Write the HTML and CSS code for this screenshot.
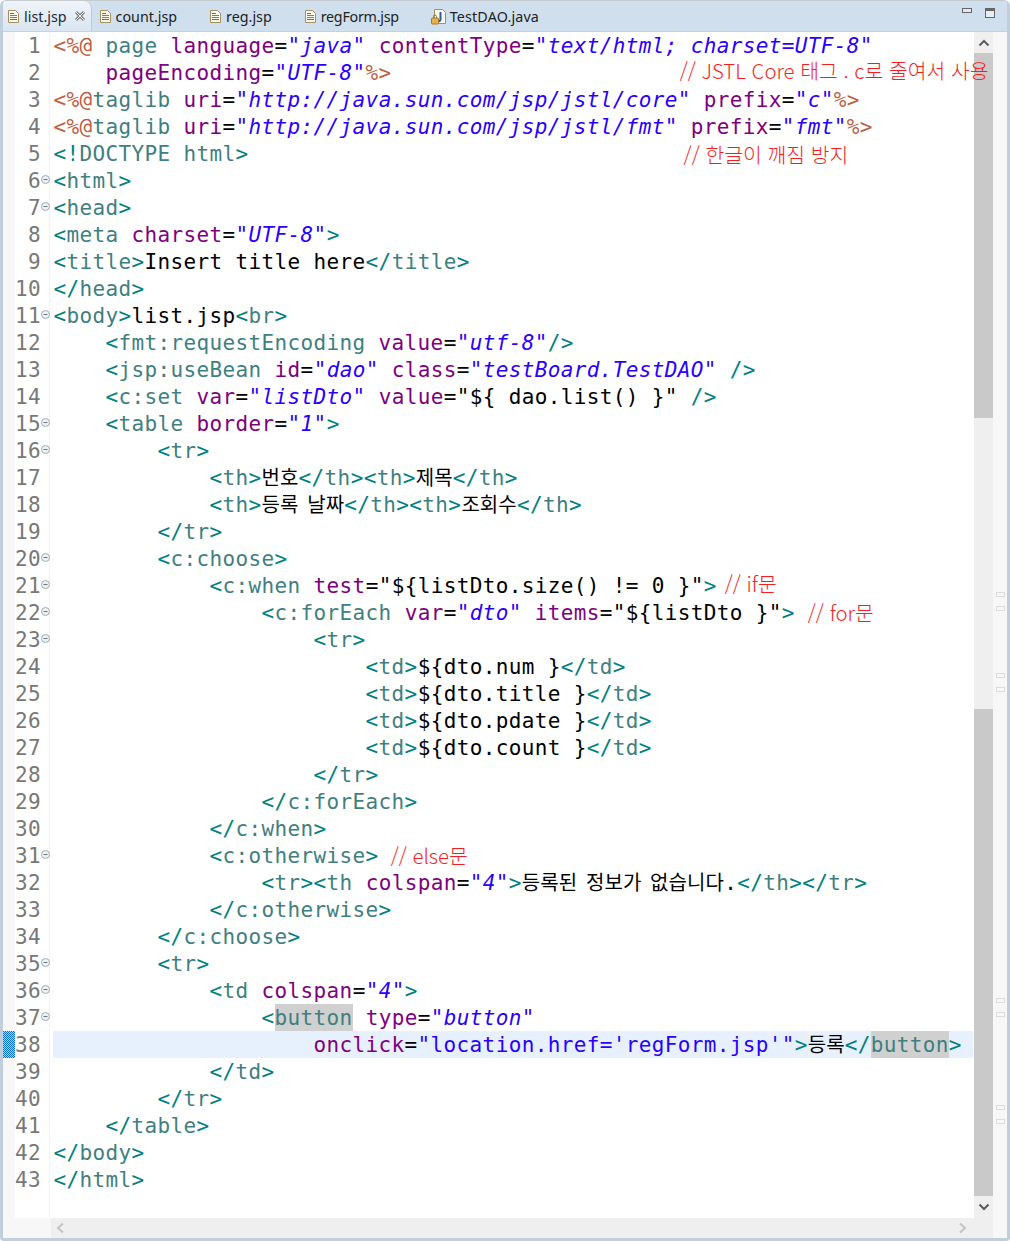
FILE: index.html
```
<!DOCTYPE html>
<html lang="ko">
<head>
<meta charset="utf-8">
<title>list.jsp</title>
<link rel="stylesheet" href="styles.css">
</head>
<body>
<svg class="defs" width="0" height="0" aria-hidden="true">
<defs>
<pattern id="dither" width="2" height="2" patternUnits="userSpaceOnUse">
<rect width="2" height="2" fill="#a8d0f5"/><rect width="1" height="1" fill="#0a72dc"/><rect x="1" y="1" width="1" height="1" fill="#0a72dc"/>
</pattern>
</defs>
<symbol id="file" viewBox="0 0 13 15">
<path d="M1.5 1.5h7l3 3v9h-10z" fill="#fbf8ee" stroke="#a8905c"/>
<path d="M3 4.5h4" stroke="#5b6f9e"/><path d="M3 6.5h7" stroke="#c06060"/><path d="M3 8.5h7" stroke="#5b8f6e"/><path d="M3 10.5h7" stroke="#5b6f9e"/>
</symbol>
<symbol id="java" viewBox="0 0 16 17">
<path d="M3.5 1.5h8l3 3v11h-11z" fill="#fbf8ee" stroke="#a8905c"/>
<path d="M9.5 4v7.5c0 1.5-1.5 2-3 1.5" fill="none" stroke="#2c5fa8" stroke-width="2"/>
<rect x="0.5" y="10" width="7" height="6" rx="1" fill="#e8b04c" stroke="#a87a2c"/>
<path d="M2.500 10V8.500a1.500 1.500 0 0 1 3 0V10" fill="none" stroke="#8a7a5c"/>
</symbol>
<symbol id="fold" viewBox="0 0 9 9">
<circle cx="4.500" cy="4.500" r="4" fill="#eef2f4" stroke="#a0acb4"/>
<path d="M2.500 4.500h4" stroke="#6c7a84"/>
</symbol>
</svg>
<div class="frame">
<header class="tabbar">
<div class="tab active"><svg class="ico"><use href="#file"/></svg><span>list.jsp</span>
<svg class="close" viewBox="0 0 12 12"><path d="M2 2l8 8M10 2l-8 8" stroke="#7c7c7c" stroke-width="3"/><path d="M2 2l8 8M10 2l-8 8" stroke="#f4f4f4" stroke-width="1"/></svg></div>
<div class="tab"><svg class="ico"><use href="#file"/></svg><span>count.jsp</span></div>
<div class="tab"><svg class="ico"><use href="#file"/></svg><span>reg.jsp</span></div>
<div class="tab"><svg class="ico"><use href="#file"/></svg><span class="tight">regForm.jsp</span></div>
<div class="tab"><svg class="ico ico-java"><use href="#java"/></svg><span class="wide">TestDAO.java</span></div>
<div class="winbtns"><i class="min"></i><i class="max"></i></div>
</header>
<div class="editor">
<div class="main">
<div class="lines">
<div class="gutter">
<div class="ln"><span class="num">1</span></div>
<div class="ln"><span class="num">2</span></div>
<div class="ln"><span class="num">3</span></div>
<div class="ln"><span class="num">4</span></div>
<div class="ln"><span class="num">5</span></div>
<div class="ln"><span class="num">6</span><svg class="fold"><use href="#fold"/></svg></div>
<div class="ln"><span class="num">7</span><svg class="fold"><use href="#fold"/></svg></div>
<div class="ln"><span class="num">8</span></div>
<div class="ln"><span class="num">9</span></div>
<div class="ln"><span class="num">10</span></div>
<div class="ln"><span class="num">11</span><svg class="fold"><use href="#fold"/></svg></div>
<div class="ln"><span class="num">12</span></div>
<div class="ln"><span class="num">13</span></div>
<div class="ln"><span class="num">14</span></div>
<div class="ln"><span class="num">15</span><svg class="fold"><use href="#fold"/></svg></div>
<div class="ln"><span class="num">16</span><svg class="fold"><use href="#fold"/></svg></div>
<div class="ln"><span class="num">17</span></div>
<div class="ln"><span class="num">18</span></div>
<div class="ln"><span class="num">19</span></div>
<div class="ln"><span class="num">20</span><svg class="fold"><use href="#fold"/></svg></div>
<div class="ln"><span class="num">21</span><svg class="fold"><use href="#fold"/></svg></div>
<div class="ln"><span class="num">22</span><svg class="fold"><use href="#fold"/></svg></div>
<div class="ln"><span class="num">23</span><svg class="fold"><use href="#fold"/></svg></div>
<div class="ln"><span class="num">24</span></div>
<div class="ln"><span class="num">25</span></div>
<div class="ln"><span class="num">26</span></div>
<div class="ln"><span class="num">27</span></div>
<div class="ln"><span class="num">28</span></div>
<div class="ln"><span class="num">29</span></div>
<div class="ln"><span class="num">30</span></div>
<div class="ln"><span class="num">31</span><svg class="fold"><use href="#fold"/></svg></div>
<div class="ln"><span class="num">32</span></div>
<div class="ln"><span class="num">33</span></div>
<div class="ln"><span class="num">34</span></div>
<div class="ln"><span class="num">35</span><svg class="fold"><use href="#fold"/></svg></div>
<div class="ln"><span class="num">36</span><svg class="fold"><use href="#fold"/></svg></div>
<div class="ln"><span class="num">37</span><svg class="fold"><use href="#fold"/></svg></div>
<div class="ln"><svg class="marker" width="12" height="27"><rect width="12" height="27" fill="url(#dither)"/></svg><span class="num">38</span></div>
<div class="ln"><span class="num">39</span></div>
<div class="ln"><span class="num">40</span></div>
<div class="ln"><span class="num">41</span></div>
<div class="ln"><span class="num">42</span></div>
<div class="ln"><span class="num">43</span></div>
</div>
<div class="code">
<div class="line"><span class="d">&lt;%@</span> <span class="n">page</span> <span class="a">language</span>=<span class="v">"java"</span> <span class="a">contentType</span>=<span class="v">"text/html; charset=UTF-8"</span></div>
<div class="line">    <span class="a">pageEncoding</span>=<span class="v">"UTF-8"</span><span class="d">%&gt;</span><span class="note note-jstl">// JSTL Core 태그 . c로 줄여서 사용</span></div>
<div class="line"><span class="d">&lt;%@</span><span class="n">taglib</span> <span class="a">uri</span>=<span class="v">"http://java.sun.com/jsp/jstl/core"</span> <span class="a">prefix</span>=<span class="v">"c"</span><span class="d">%&gt;</span></div>
<div class="line"><span class="d">&lt;%@</span><span class="n">taglib</span> <span class="a">uri</span>=<span class="v">"http://java.sun.com/jsp/jstl/fmt"</span> <span class="a">prefix</span>=<span class="v">"fmt"</span><span class="d">%&gt;</span></div>
<div class="line"><span class="k">&lt;!</span><span class="n">DOCTYPE</span> <span class="n">html</span><span class="k">&gt;</span><span class="note note-enc">// 한글이 깨짐 방지</span></div>
<div class="line"><span class="k">&lt;</span><span class="n">html</span><span class="k">&gt;</span></div>
<div class="line"><span class="k">&lt;</span><span class="n">head</span><span class="k">&gt;</span></div>
<div class="line"><span class="k">&lt;</span><span class="n">meta</span> <span class="a">charset</span>=<span class="v">"UTF-8"</span><span class="k">&gt;</span></div>
<div class="line"><span class="k">&lt;</span><span class="n">title</span><span class="k">&gt;</span>Insert title here<span class="k">&lt;/</span><span class="n">title</span><span class="k">&gt;</span></div>
<div class="line"><span class="k">&lt;/</span><span class="n">head</span><span class="k">&gt;</span></div>
<div class="line"><span class="k">&lt;</span><span class="n">body</span><span class="k">&gt;</span>list.jsp<span class="k">&lt;</span><span class="n">br</span><span class="k">&gt;</span></div>
<div class="line">    <span class="k">&lt;</span><span class="n">fmt:requestEncoding</span> <span class="a">value</span>=<span class="v">"utf-8"</span><span class="k">/&gt;</span></div>
<div class="line">    <span class="k">&lt;</span><span class="n">jsp:useBean</span> <span class="a">id</span>=<span class="v">"dao"</span> <span class="a">class</span>=<span class="v">"testBoard.TestDAO"</span> <span class="k">/&gt;</span></div>
<div class="line">    <span class="k">&lt;</span><span class="n">c:set</span> <span class="a">var</span>=<span class="v">"listDto"</span> <span class="a">value</span>=<span class="e">"</span>${ dao.list() }<span class="e">"</span> <span class="k">/&gt;</span></div>
<div class="line">    <span class="k">&lt;</span><span class="n">table</span> <span class="a">border</span>=<span class="v">"1"</span><span class="k">&gt;</span></div>
<div class="line">        <span class="k">&lt;</span><span class="n">tr</span><span class="k">&gt;</span></div>
<div class="line">            <span class="k">&lt;</span><span class="n">th</span><span class="k">&gt;</span><span class="h">번호</span><span class="k">&lt;/</span><span class="n">th</span><span class="k">&gt;&lt;</span><span class="n">th</span><span class="k">&gt;</span><span class="h">제목</span><span class="k">&lt;/</span><span class="n">th</span><span class="k">&gt;</span></div>
<div class="line">            <span class="k">&lt;</span><span class="n">th</span><span class="k">&gt;</span><span class="h">등록 날짜</span><span class="k">&lt;/</span><span class="n">th</span><span class="k">&gt;&lt;</span><span class="n">th</span><span class="k">&gt;</span><span class="h">조회수</span><span class="k">&lt;/</span><span class="n">th</span><span class="k">&gt;</span></div>
<div class="line">        <span class="k">&lt;/</span><span class="n">tr</span><span class="k">&gt;</span></div>
<div class="line">        <span class="k">&lt;</span><span class="n">c:choose</span><span class="k">&gt;</span></div>
<div class="line">            <span class="k">&lt;</span><span class="n">c:when</span> <span class="a">test</span>=<span class="e">"</span>${listDto.size() != 0 }<span class="e">"</span><span class="k">&gt;</span><span class="note note-if">// if문</span></div>
<div class="line">                <span class="k">&lt;</span><span class="n">c:forEach</span> <span class="a">var</span>=<span class="v">"dto"</span> <span class="a">items</span>=<span class="e">"</span>${listDto }<span class="e">"</span><span class="k">&gt;</span><span class="note note-for">// for문</span></div>
<div class="line">                    <span class="k">&lt;</span><span class="n">tr</span><span class="k">&gt;</span></div>
<div class="line">                        <span class="k">&lt;</span><span class="n">td</span><span class="k">&gt;</span>${dto.num }<span class="k">&lt;/</span><span class="n">td</span><span class="k">&gt;</span></div>
<div class="line">                        <span class="k">&lt;</span><span class="n">td</span><span class="k">&gt;</span>${dto.title }<span class="k">&lt;/</span><span class="n">td</span><span class="k">&gt;</span></div>
<div class="line">                        <span class="k">&lt;</span><span class="n">td</span><span class="k">&gt;</span>${dto.pdate }<span class="k">&lt;/</span><span class="n">td</span><span class="k">&gt;</span></div>
<div class="line">                        <span class="k">&lt;</span><span class="n">td</span><span class="k">&gt;</span>${dto.count }<span class="k">&lt;/</span><span class="n">td</span><span class="k">&gt;</span></div>
<div class="line">                    <span class="k">&lt;/</span><span class="n">tr</span><span class="k">&gt;</span></div>
<div class="line">                <span class="k">&lt;/</span><span class="n">c:forEach</span><span class="k">&gt;</span></div>
<div class="line">            <span class="k">&lt;/</span><span class="n">c:when</span><span class="k">&gt;</span></div>
<div class="line">            <span class="k">&lt;</span><span class="n">c:otherwise</span><span class="k">&gt;</span><span class="note note-else">// else문</span></div>
<div class="line">                <span class="k">&lt;</span><span class="n">tr</span><span class="k">&gt;&lt;</span><span class="n">th</span> <span class="a">colspan</span>=<span class="v">"4"</span><span class="k">&gt;</span><span class="h">등록된 정보가 없습니다</span>.<span class="k">&lt;/</span><span class="n">th</span><span class="k">&gt;&lt;/</span><span class="n">tr</span><span class="k">&gt;</span></div>
<div class="line">            <span class="k">&lt;/</span><span class="n">c:otherwise</span><span class="k">&gt;</span></div>
<div class="line">        <span class="k">&lt;/</span><span class="n">c:choose</span><span class="k">&gt;</span></div>
<div class="line">        <span class="k">&lt;</span><span class="n">tr</span><span class="k">&gt;</span></div>
<div class="line">            <span class="k">&lt;</span><span class="n">td</span> <span class="a">colspan</span>=<span class="v">"4"</span><span class="k">&gt;</span></div>
<div class="line">                <span class="k">&lt;</span><span class="n mark">button</span> <span class="a">type</span>=<span class="v">"button"</span></div>
<div class="line current">                    <span class="a">onclick</span>=<span class="s">"location.href='regForm.jsp'"</span><span class="k">&gt;</span><span class="h">등록</span><span class="k">&lt;/</span><span class="n mark">button</span><span class="k">&gt;</span></div>
<div class="line">            <span class="k">&lt;/</span><span class="n">td</span><span class="k">&gt;</span></div>
<div class="line">        <span class="k">&lt;/</span><span class="n">tr</span><span class="k">&gt;</span></div>
<div class="line">    <span class="k">&lt;/</span><span class="n">table</span><span class="k">&gt;</span></div>
<div class="line"><span class="k">&lt;/</span><span class="n">body</span><span class="k">&gt;</span></div>
<div class="line"><span class="k">&lt;/</span><span class="n">html</span><span class="k">&gt;</span></div>
</div>
</div>
<div class="hscroll">
<div class="hscroll-corner"></div>
<div class="hscroll-track">
<svg class="chev" viewBox="0 0 10 12"><path d="M8 1.500L3 6l5 4.500" fill="none" stroke="#c4c4c4" stroke-width="2"/></svg>
<svg class="chev" viewBox="0 0 10 12"><path d="M2 1.500L7 6l-5 4.500" fill="none" stroke="#c4c4c4" stroke-width="2"/></svg>
</div>
</div>
</div>
<div class="vscroll">
<div class="vbtn"><svg class="vchev" viewBox="0 0 12 8"><path d="M1.500 6.500L6 2l4.500 4.500" fill="none" stroke="#5c5c5c" stroke-width="2"/></svg></div>
<div class="thumb thumb-top"></div>
<div class="vgap"></div>
<div class="thumb thumb-bottom"></div>
<div class="vbtn"><svg class="vchev" viewBox="0 0 12 8"><path d="M1.500 1.500L6 6l4.500-4.500" fill="none" stroke="#5c5c5c" stroke-width="2"/></svg></div>
<div class="vcorner"></div>
</div>
<div class="rail">
<i class="rmark rm-a"></i><i class="rmark"></i>
<i class="rmark rm-b"></i><i class="rmark"></i>
<i class="rmark rm-c"></i><i class="rmark"></i>
<i class="rmark rm-d"></i><i class="rmark"></i>
</div>
</div>
</div>
</body>
</html>
```
FILE: styles.css
```
* { box-sizing: border-box; }
html, body { margin: 0; padding: 0; background: #fff; }
.defs { position: absolute; }
.frame {
  width: 1010px;
  height: 1241px;
  display: flex;
  flex-direction: column;
  border: 3px solid #c1cedc;
  border-top: 0;
  border-radius: 6px 6px 4px 4px;
  overflow: hidden;
  background: #fff;
}
.tabbar {
  height: 32px;
  margin: 0 -3px;
  display: flex;
  align-items: stretch;
  background: #cfdfee;
  border-top: 1px solid #c6c9cd;
  border-bottom: 1px solid #c2d2e2;
  font-family: "Noto Sans", sans-serif;
  font-size: 14.3px;
  color: #222;
}
.tab {
  display: flex;
  align-items: center;
  padding: 0 25px 0 7px;
  gap: 4px;
}
.tab.active {
  padding-right: 5px;
  background: linear-gradient(#f0f4f9, #d9e5f1);
  border-right: 1px solid #bccbdb;
  border-radius: 0 8px 0 0;
  color: #1a2a40;
}
.tight { letter-spacing: -0.27px; }
.wide { letter-spacing: 0.15px; }
.ico { width: 13px; height: 15px; }
.ico-java { width: 16px; height: 17px; margin-right: -1px; }
.close { width: 12px; height: 12px; margin-left: 3px; }
.winbtns {
  margin-left: auto;
  padding: 7px 15px 0 0;
  display: flex;
  gap: 13px;
}
.min { width: 10px; height: 5px; border: 1px solid #666; background: #e4e8ec; }
.max { width: 10px; height: 10px; border: 1px solid #666; border-top-width: 3px; background: #e9eef3; }
.editor { flex: 1; display: flex; min-height: 0; }
.main { flex: 1; min-width: 0; display: flex; flex-direction: column; }
.lines { flex: 1; display: flex; min-height: 0; }
.gutter {
  width: 50px;
  flex: none;
  border-left: 12px solid #f7f7f7;
  border-right: 3px solid #fff;
  box-shadow: inset -1px 0 0 #f2f2f2;
  font-family: "DejaVu Sans Mono", monospace;
  font-size: 21px;
  letter-spacing: 0.36px;
  color: #787878;
}
.ln { position: relative; height: 27px; line-height: 29px; display: flex; }
.num { width: 26px; text-align: right; }
.fold { width: 9px; height: 9px; margin-top: 8px; }
.marker { position: absolute; left: -12px; top: 0; }
.code {
  flex: 1;
  min-width: 0;
  position: relative;
  z-index: 2;
  font-family: "DejaVu Sans Mono", monospace;
  font-size: 21px;
  letter-spacing: 0.36px;
  color: #000;
}
.line {
  height: 27px;
  line-height: 29px;
  padding-left: 0.5px;
  margin-right: 1px;
  white-space: pre;
}
.line.current { background: #e6f1fd; }
.d { color: #bf5f3f; }
.k { color: #008080; }
.n { color: #3f7f7f; }
.a { color: #7f007f; }
.v { color: #2a00ff; font-style: italic; }
.e { font-style: italic; }
.s { color: #2a00ff; }
.mark { display: inline-block; height: 27px; background: #d0d0d0; }
.h {
  font-family: "Noto Sans CJK KR", sans-serif;
  font-size: 20px;
  line-height: 1;
  letter-spacing: 0.1px;
  word-spacing: 3px;
}
.note {
  position: relative;
  font-family: "Noto Sans CJK KR", sans-serif;
  font-size: 20.4px;
  font-weight: 300;
  line-height: 1;
  letter-spacing: 0;
  color: #f41e1e;
}
.note-jstl { margin-left: 288px; top: -1px; }
.note-enc { margin-left: 435px; top: 2px; }
.note-if { margin-left: 8px; top: -1px; }
.note-for { margin-left: 13px; top: 1px; }
.note-else { margin-left: 12px; top: 1px; }
.hscroll { height: 20px; flex: none; display: flex; }
.hscroll-corner { width: 48px; background: #f7f7f7; }
.hscroll-track {
  flex: 1;
  background: #efefef;
  display: flex;
  justify-content: space-between;
  align-items: center;
  padding: 0 6px 0 4px;
}
.chev { width: 10px; height: 12px; }
.vscroll {
  width: 19px;
  flex: none;
  display: flex;
  flex-direction: column;
  background: #efefef;
}
.vbtn { height: 21px; flex: none; display: flex; align-items: center; justify-content: center; }
.vchev { width: 12px; height: 8px; }
.thumb { background: #c9c9c9; flex: none; }
.thumb-top { height: 365px; }
.vgap { height: 291px; flex: none; }
.thumb-bottom { height: 487px; }
.vcorner { height: 21px; flex: none; }
.rail {
  width: 14px;
  flex: none;
  background: #f7f7f7;
  display: flex;
  flex-direction: column;
  align-items: center;
  gap: 9px;
  position: relative;
}
.rmark { width: 9px; height: 5px; flex: none; border: 1px solid #dcdcdc; }
.rm-a { margin-top: 560px; }
.rm-b { margin-top: 53px; }
.rm-c { margin-top: 297px; }
.rm-d { margin-top: 79px; }
```
